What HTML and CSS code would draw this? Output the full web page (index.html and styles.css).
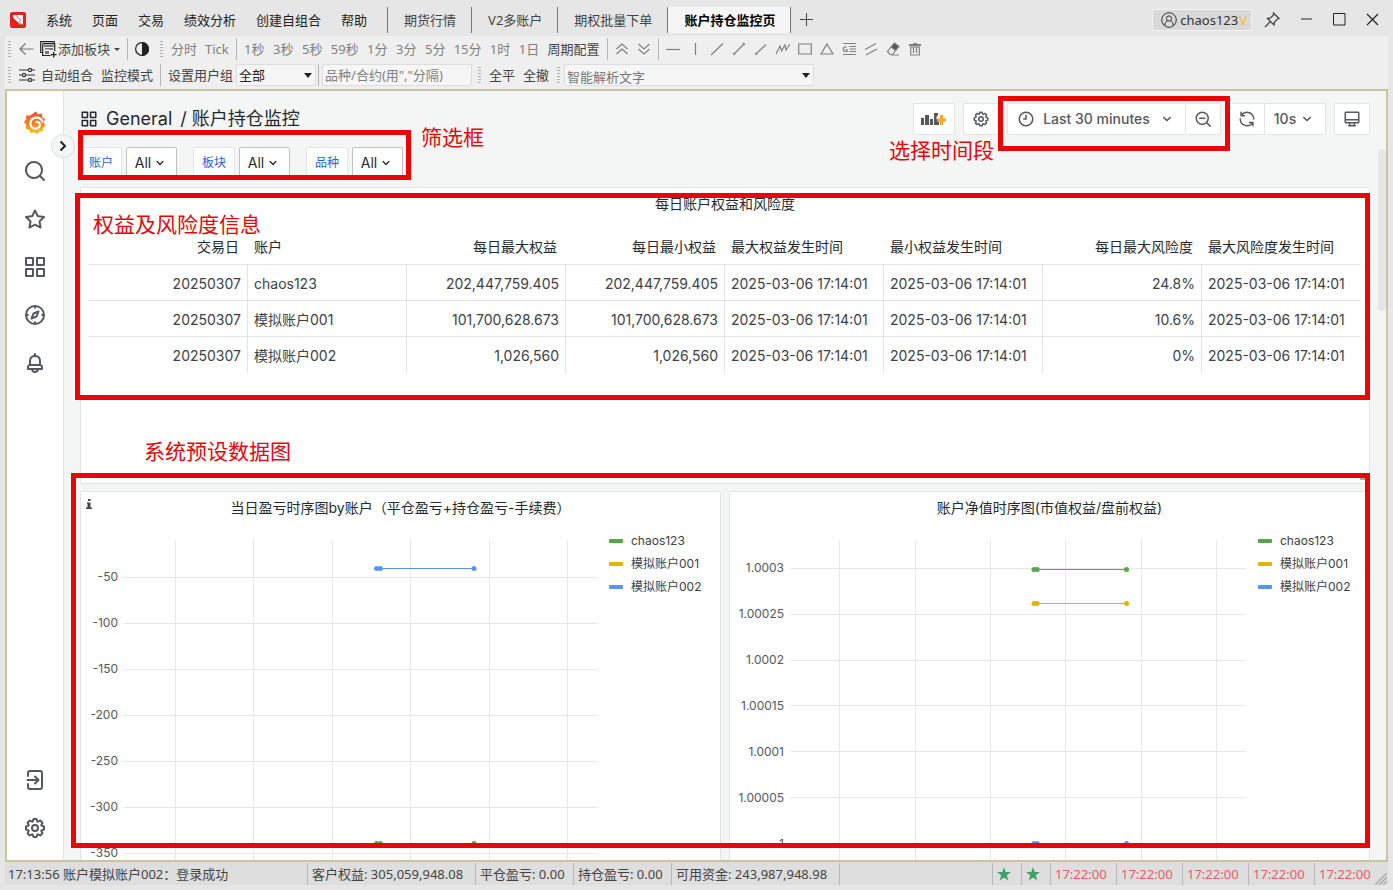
FILE: index.html
```html
<!DOCTYPE html>
<html lang="zh-CN">
<head>
<meta charset="utf-8">
<title>账户持仓监控页</title>
<link rel="stylesheet" href="styles.css">
</head>
<body>
<svg class="defs" aria-hidden="true">
  <symbol id="i-down" viewBox="0 0 24 24"><path d="M17,9.17a1,1,0,0,0-1.41,0L12,12.71,8.46,9.17a1,1,0,0,0-1.41,0,1,1,0,0,0,0,1.42l4.24,4.24a1,1,0,0,0,1.42,0L17,10.59A1,1,0,0,0,17,9.17Z"/></symbol>
  <symbol id="i-cog" viewBox="0 0 24 24"><path d="M21.32,9.55l-1.89-.63.89-1.78A1,1,0,0,0,20.13,6L18,3.87a1,1,0,0,0-1.15-.19l-1.78.89-.63-1.89A1,1,0,0,0,13.5,2h-3a1,1,0,0,0-.95.68L8.92,4.57,7.14,3.68A1,1,0,0,0,6,3.87L3.87,6a1,1,0,0,0-.19,1.15l.89,1.78-1.89.63A1,1,0,0,0,2,10.5v3a1,1,0,0,0,.68.95l1.89.63-.89,1.78A1,1,0,0,0,3.87,18L6,20.13a1,1,0,0,0,1.15.19l1.78-.89.63,1.89a1,1,0,0,0,.95.68h3a1,1,0,0,0,.95-.68l.63-1.89,1.78.89A1,1,0,0,0,18,20.13L20.13,18a1,1,0,0,0,.19-1.15l-.89-1.78,1.89-.63A1,1,0,0,0,22,13.5v-3A1,1,0,0,0,21.32,9.55ZM20,12.78l-1.2.4A2,2,0,0,0,17.64,16l.57,1.14-1.1,1.1L16,17.64a2,2,0,0,0-2.79,1.16l-.4,1.2H11.22l-.4-1.2A2,2,0,0,0,8,17.64l-1.14.57-1.1-1.1L6.36,16A2,2,0,0,0,5.2,13.18L4,12.78V11.22l1.2-.4A2,2,0,0,0,6.36,8L5.79,6.89l1.1-1.1L8,6.36A2,2,0,0,0,10.82,5.2l.4-1.2h1.56l.4,1.2A2,2,0,0,0,16,6.36l1.14-.57,1.1,1.1L17.64,8a2,2,0,0,0,1.16,2.79l1.2.4ZM12,8a4,4,0,1,0,4,4A4,4,0,0,0,12,8Zm0,6a2,2,0,1,1,2-2A2,2,0,0,1,12,14Z"/></symbol>
  <symbol id="i-apps" viewBox="0 0 24 24"><path fill="none" stroke="currentColor" stroke-width="2" stroke-linejoin="round" d="M3 3h7v7H3zM14 3h7v7h-7zM3 14h7v7H3zM14 14h7v7h-7z"/></symbol>
  <symbol id="i-star5" viewBox="0 0 14 14"><path d="M7 0l1.700 5H14L9.800 8.200 11.300 13.600 7 10.400 2.700 13.600 4.200 8.200 0 5h5.300z"/></symbol>
</svg>

<header class="titlebar">
  <svg class="logo" viewBox="0 0 16 16" role="img" aria-label="系统标志"><rect width="16" height="16" rx="2" fill="#e2231a"/><path fill="#fff" d="M3 3h3l2.500 2.500L6.500 3H13v10l-2.500-2.500V13L3 5.500z"/><path stroke="#e2231a" stroke-width=".8" d="M6 3.500l5 5M8.500 10.500l2-2"/></svg>
  <nav class="menu">
    <button>系统</button><button>页面</button><button>交易</button><button>绩效分析</button><button>创建自组合</button><button>帮助</button>
  </nav>
  <nav class="tabs">
    <button>期货行情</button><button>V2多账户</button><button>期权批量下单</button><button class="active">账户持仓监控页</button>
  </nav>
  <button class="icon-btn add-tab" aria-label="新建页面"><svg width="13" height="13" viewBox="0 0 13 13"><path d="M6.500 0v13M0 6.500h13" stroke="#444"/></svg></button>
  <div class="window-tools">
    <button class="user"><svg class="line" width="16" height="16" viewBox="0 0 16 16" stroke="#333"><circle cx="8" cy="8" r="7.300"/><circle cx="8" cy="6.500" r="2.600"/><path d="M4 13.500V12c0-2 1.500-2.800 2.500-3M12 13.500V12c0-2-1.500-2.800-2.500-3"/></svg><span>chaos123<b>V</b></span></button>
    <button class="icon-btn" aria-label="固定"><svg class="line" width="16" height="16" viewBox="0 0 16 16" stroke="#444" stroke-width="1.300"><path d="M9.500 1l5.500 5.500-1.500.5-3 3-.5 3-6.500-6.500 3-.5 3-3zM6 10l-5 5"/></svg></button>
    <button class="icon-btn" aria-label="最小化"><svg width="13" height="13" viewBox="0 0 13 13"><path d="M1 6h11" stroke="#888" stroke-width="2"/></svg></button>
    <button class="icon-btn" aria-label="最大化"><svg width="13" height="13" viewBox="0 0 13 13"><path d="M.5.500h11.500v11.500H.5z" fill="none" stroke="#222"/></svg></button>
    <button class="icon-btn" aria-label="关闭"><svg width="13" height="13" viewBox="0 0 13 13"><path d="M1 1l11 11M12 1L1 12" stroke="#222" stroke-width="1.200"/></svg></button>
  </div>
</header>

<section class="toolbars">
  <div class="bar">
    <i class="grip"></i>
    <button class="icon-btn back" aria-label="返回"><svg class="line" width="15" height="12" viewBox="0 0 15 12" stroke="#777" stroke-width="1.200"><path d="M14.500 6H1M6.500.5L1 6l5.500 5.500"/></svg></button>
    <button class="add-block"><svg width="17" height="17" viewBox="0 0 17 17"><path fill="none" stroke="#222" stroke-width="1.200" d="M2.500 11.500H.7V.7h13.500V2M2.700 2.700h12v7.500M2.700 2.700v11.800h8"/><path fill="#777" d="M4 4h9.500v2H4zM5 7h5v1.500H5zM5 10h4v3H5zM10 7h3v2h-3z"/><path stroke="#111" stroke-width="1.200" d="M13.700 11v5.500M11 13.700h5.500"/></svg>添加板块<i class="caret small"></i></button>
    <i class="sep"></i>
    <button class="icon-btn contrast" aria-label="切换主题"><svg width="14" height="14" viewBox="0 0 14 14"><circle cx="7" cy="7" r="6.400" fill="none" stroke="#222" stroke-width="1.200"/><path d="M7 0a7 7 0 0 1 0 14z" fill="#222"/></svg></button>
    <i class="grip"></i>
    <div class="periods muted"><button>分时</button><button>Tick</button></div>
    <i class="sep"></i>
    <div class="periods muted"><button>1秒</button><button>3秒</button><button>5秒</button><button>59秒</button><button>1分</button><button>3分</button><button>5分</button><button>15分</button><button>1时</button><button>1日</button><button class="dark">周期配置</button></div>
    <i class="sep"></i>
    <div class="draw">
      <button aria-label="上移"><svg viewBox="0 0 14 14"><path d="M1.500 7L7 2l5.500 5M1.500 12L7 7l5.500 5"/></svg></button>
      <button aria-label="下移"><svg viewBox="0 0 14 14"><path d="M1.500 2L7 7l5.500-5M1.500 7L7 12l5.500-5"/></svg></button>
    </div>
    <i class="sep"></i>
    <div class="draw">
      <button aria-label="水平线"><svg viewBox="0 0 14 14"><path d="M0 7.500h14"/></svg></button>
      <button aria-label="垂直线"><svg viewBox="0 0 14 14"><path d="M7.500 1v12"/></svg></button>
      <button aria-label="直线"><svg viewBox="0 0 14 14"><path d="M1 13L13 1.500"/></svg></button>
      <button aria-label="线段"><svg viewBox="0 0 14 14"><path d="M2 12L12 2M1 11l2 2M11 1l2 2"/></svg></button>
      <button aria-label="射线"><svg viewBox="0 0 14 14"><path d="M2 12L12 2.500M1 11l2 2"/></svg></button>
      <button aria-label="折线"><svg viewBox="0 0 14 14"><path d="M0 12L4 4l1.500 5L9 3l1 5 4-6"/></svg></button>
      <button aria-label="矩形"><svg viewBox="0 0 14 14"><path d="M.7 2h12.600v10H.7z"/></svg></button>
      <button aria-label="三角形"><svg viewBox="0 0 14 14"><path d="M7 2l6 10H1z"/></svg></button>
      <button aria-label="黄金分割"><svg viewBox="0 0 14 14"><path d="M1 1.500h13M7.500 4.500H14M7.500 7H14M7.500 9.500H14M1 12.500h13M5 5H2.500L1.500 6v2.500l1 1H5V7.500H3.500"/></svg></button>
      <button aria-label="平行线"><svg viewBox="0 0 14 14"><path d="M1 7.500L12 1.500M2 13l11-6"/></svg></button>
      <button aria-label="橡皮擦"><svg viewBox="0 0 14 14"><path fill="#555" d="M8.500 1l4.500 3.500-3.500 4L5 5z"/><path d="M5 5L1.500 9.500 4 12.500h2.500l3-4M5 13h8"/></svg></button>
      <button aria-label="删除"><svg viewBox="0 0 14 14"><path stroke-width="1.800" d="M1 3h12M5 2h4"/><path d="M2.700 5v8h8.600V5zM5.500 5v6M8.500 5v6"/></svg></button>
    </div>
  </div>
  <div class="bar">
    <i class="grip"></i>
    <button class="icon-btn sliders" aria-label="设置"><svg class="line" width="16" height="14" viewBox="0 0 16 14" stroke="#333" stroke-width="1.200"><path d="M0 2h9M13 2h3M0 7h3M7 7h9M0 12h9M13 12h3"/><circle cx="11" cy="2" r="1.600"/><circle cx="5" cy="7" r="1.600"/><circle cx="11" cy="12" r="1.600"/></svg></button>
    <div class="periods"><button>自动组合</button><button>监控模式</button></div>
    <i class="sep"></i>
    <label class="group-label" for="group">设置用户组</label>
    <span class="combo group"><select id="group"><option>全部</option></select><i class="caret"></i></span>
    <i class="sep tight"></i>
    <input class="contract" type="text" aria-label="品种或合约" placeholder='品种/合约(用&quot;,&quot;分隔)'>
    <i class="grip"></i>
    <div class="periods"><button>全平</button><button>全撤</button></div>
    <i class="grip"></i>
    <span class="combo parse"><select aria-label="智能解析文字"><option>智能解析文字</option></select><i class="caret"></i></span>
  </div>
</section>

<main class="frame">
  <aside class="side">
    <svg class="grafana" viewBox="0 0 24 26" role="img" aria-label="Grafana">
      <defs><linearGradient id="flame" x1="0" y1="0" x2="0" y2="1"><stop offset="0" stop-color="#ee4c2e"/><stop offset=".55" stop-color="#f58220"/><stop offset="1" stop-color="#fcc80a"/></linearGradient></defs>
      <path fill="url(#flame)" d="M9.500 3L13 .5l2 3 4.500-.8.300 4L23 9l-1.600 3.500 1.800 3.300-2.700 2.700-.2 3.500-3.500-.1L14.500 25l-3-2L7 24l-1-3.500L1.800 19l.7-4L0 12l2.600-3L2.200 4.800 6.500 5z"/>
      <path fill="none" stroke="#fff" stroke-width="2.400" stroke-linecap="round" d="M20 11.500C19 8.500 16 7 13 7.200c-4 .3-6.500 3.500-6 7 .5 3.300 3.200 5.300 6.300 4.900 2.700-.4 4.300-2.600 3.900-4.800-.4-1.800-2-2.900-3.600-2.500"/>
    </svg>
    <a href="#" aria-label="搜索"><svg viewBox="0 0 24 24"><path d="M21.710,20.290,18,16.610A9,9,0,1,0,16.610,18l3.680,3.680a1,1,0,0,0,1.420,0A1,1,0,0,0,21.710,20.290ZM11,18a7,7,0,1,1,7-7A7,7,0,0,1,11,18Z"/></svg></a>
    <a href="#" aria-label="收藏"><svg viewBox="0 0 24 24"><path d="M22,9.670A1,1,0,0,0,21.140,9l-5.690-.83L12.900,3a1,1,0,0,0-1.800,0L8.550,8.160,2.860,9a1,1,0,0,0-.81.680,1,1,0,0,0,.25,1l4.130,4-1,5.680A1,1,0,0,0,6.900,21.440L12,18.770l5.100,2.670a.93.930,0,0,0,.46.120,1,1,0,0,0,.59-.19,1,1,0,0,0,.4-1l-1-5.680,4.130-4A1,1,0,0,0,22,9.670Zm-6.150,4a1,1,0,0,0-.29.880l.72,4.200-3.760-2a1.060,1.060,0,0,0-.94,0l-3.760,2,.72-4.200a1,1,0,0,0-.29-.88l-3-3,4.210-.61a1,1,0,0,0,.76-.55L12,5.700l1.880,3.820a1,1,0,0,0,.76.550l4.210.610Z"/></svg></a>
    <a href="#" aria-label="仪表盘"><svg><use href="#i-apps"/></svg></a>
    <a href="#" aria-label="探索"><svg viewBox="0 0 24 24"><g fill="none" stroke="currentColor" stroke-width="2"><circle cx="12" cy="12" r="9"/><path stroke-linejoin="round" d="M15.500 8.500l-2 5-5 2 2-5zM12 3v2.500M12 18.500V21M3 12h2.500M18.500 12H21"/></g></svg></a>
    <a href="#" aria-label="告警"><svg viewBox="0 0 24 24"><path d="M18,13.180V10a6,6,0,0,0-5-5.910V3a1,1,0,0,0-2,0V4.090A6,6,0,0,0,6,10v3.180A3,3,0,0,0,4,16v2a1,1,0,0,0,1,1H8.140a4,4,0,0,0,7.720,0H19a1,1,0,0,0,1-1V16A3,3,0,0,0,18,13.180ZM8,10a4,4,0,0,1,8,0v3H8Zm4,10a2,2,0,0,1-1.720-1h3.440A2,2,0,0,1,12,20Zm6-3H6V16a1,1,0,0,1,1-1H17a1,1,0,0,1,1,1Z"/></svg></a>
    <a href="#" class="push" aria-label="登录"><svg viewBox="0 0 24 24"><path fill="none" stroke="currentColor" stroke-width="2" stroke-linecap="round" stroke-linejoin="round" d="M5 8V5q0-2 2-2h10q2 0 2 2v14q0 2-2 2H7q-2 0-2-2v-3M4.500 12H15M12 8.500l3.500 3.500-3.500 3.500"/></svg></a>
    <a href="#" aria-label="配置"><svg><use href="#i-cog"/></svg></a>
    <button class="expand" aria-label="展开菜单"><svg width="8" height="12" viewBox="0 0 8 12"><path d="M1.500 1.500L6 6l-4.500 4.500" fill="none" stroke="#222" stroke-width="2"/></svg></button>
  </aside>

  <div class="dash">
    <div class="dash-head">
      <h1><svg><use href="#i-apps"/></svg><a href="#">General</a><span>/ 账户持仓监控</span></h1>
      <div class="actions">
        <button class="box wide" aria-label="添加面板"><svg width="26" height="16" viewBox="0 0 26 16"><path fill="#55585c" d="M0 7h3v7H0zM4 4h4v10H4zM9 8h3v6H9zM13 2h4v2l-1.500 2v2L18 11v3h-5z"/><path fill="#f9a62b" d="M19 4h3v3.500h3v3h-3V14h-3v-3.500h-3v-3h3z"/></svg></button>
        <button class="box" aria-label="仪表盘设置"><svg><use href="#i-cog"/></svg></button>
        <div class="joined">
          <button class="box range"><svg viewBox="0 0 24 24"><path fill="none" stroke="currentColor" stroke-width="2" stroke-linecap="round" d="M12 3a9 9 0 1 1 0 18a9 9 0 1 1 0-18M12 7v5H9"/></svg>Last 30 minutes<svg><use href="#i-down"/></svg></button>
          <button class="box" aria-label="缩小"><svg viewBox="0 0 24 24"><path fill="none" stroke="currentColor" stroke-width="2" stroke-linecap="round" d="M11 3a8 8 0 1 1 0 16a8 8 0 1 1 0-16M17 17l4.500 4.500M7.500 11h7"/></svg></button>
        </div>
        <div class="joined">
          <button class="box" aria-label="刷新"><svg viewBox="0 0 24 24"><path d="M19.910,15.510H15.380a1,1,0,0,0,0,2h2.400A8,8,0,0,1,4,12a1,1,0,0,0-2,0,10,10,0,0,0,16.880,7.230V21a1,1,0,0,0,2,0V16.500A1,1,0,0,0,19.910,15.510ZM12,2A10,10,0,0,0,5.120,4.770V3a1,1,0,0,0-2,0V7.500a1,1,0,0,0,1,1h4.500a1,1,0,0,0,0-2H6.220A8,8,0,0,1,20,12a1,1,0,0,0,2,0A10,10,0,0,0,12,2Z"/></svg></button>
          <button class="box every">10s<svg><use href="#i-down"/></svg></button>
        </div>
        <button class="box" aria-label="全屏"><svg viewBox="0 0 24 24"><path fill="none" stroke="currentColor" stroke-width="2" stroke-linejoin="round" d="M4 3h16q1 0 1 1v12q0 1-1 1H4q-1 0-1-1V4q0-1 1-1zM3 13h18M9 17v4h6v-4M7 21h10"/></svg></button>
      </div>
    </div>

    <div class="filters">
      <div class="filter"><span id="f1">账户</span><button aria-labelledby="f1">All<svg><use href="#i-down"/></svg></button></div>
      <div class="filter"><span id="f2">板块</span><button aria-labelledby="f2">All<svg><use href="#i-down"/></svg></button></div>
      <div class="filter"><span id="f3">品种</span><button aria-labelledby="f3">All<svg><use href="#i-down"/></svg></button></div>
    </div>

    <section class="panel table-panel">
      <h2>每日账户权益和风险度</h2>
      <table>
        <thead><tr><th class="n">交易日</th><th>账户</th><th class="n">每日最大权益</th><th class="n">每日最小权益</th><th>最大权益发生时间</th><th>最小权益发生时间</th><th class="n">每日最大风险度</th><th>最大风险度发生时间</th></tr></thead>
        <tbody>
          <tr><td class="n">20250307</td><td>chaos123</td><td class="n">202,447,759.405</td><td class="n">202,447,759.405</td><td>2025-03-06 17:14:01</td><td>2025-03-06 17:14:01</td><td class="n">24.8%</td><td>2025-03-06 17:14:01</td></tr>
          <tr><td class="n">20250307</td><td>模拟账户001</td><td class="n">101,700,628.673</td><td class="n">101,700,628.673</td><td>2025-03-06 17:14:01</td><td>2025-03-06 17:14:01</td><td class="n">10.6%</td><td>2025-03-06 17:14:01</td></tr>
          <tr><td class="n">20250307</td><td>模拟账户002</td><td class="n">1,026,560</td><td class="n">1,026,560</td><td>2025-03-06 17:14:01</td><td>2025-03-06 17:14:01</td><td class="n">0%</td><td>2025-03-06 17:14:01</td></tr>
        </tbody>
      </table>
      <i class="resize"></i>
    </section>

    <div class="charts">
      <section class="panel chart">
        <i class="info"><svg width="6" height="10" viewBox="0 0 6 10"><path fill="#444" d="M2 0h2.500v2H2zM1 3.500h3.500V8.500H6V10H0V8.500h1.500V5H1z"/></svg></i>
        <h2>当日盈亏时序图by账户（平仓盈亏+持仓盈亏-手续费）</h2>
        <div class="plot-row">
          <ol class="axis pnl"><li>-50</li><li>-100</li><li>-150</li><li>-200</li><li>-250</li><li>-300</li><li>-350</li></ol>
          <svg class="plot">
            <g class="grid">
              <path d="M0 37.500h2000M0 83.500h2000M0 129.500h2000M0 175.500h2000M0 221.500h2000M0 267.500h2000M0 313.500h2000"/>
              <line x1="10.900%" x2="10.900%" y2="100%"/><line x1="27.400%" x2="27.400%" y2="100%"/><line x1="44.100%" x2="44.100%" y2="100%"/><line x1="60.600%" x2="60.600%" y2="100%"/><line x1="77.200%" x2="77.200%" y2="100%"/><line x1="93.700%" x2="93.700%" y2="100%"/>
            </g>
            <g class="blue"><line x1="53.300%" x2="74%" y1="28.500" y2="28.500"/><circle cx="53.400%" cy="28.500" r="2.500"/><circle cx="54.200%" cy="28.500" r="2.500"/><circle cx="74%" cy="28.500" r="2.500"/></g>
            <g class="green"><line x1="53.300%" x2="74%" y1="303.500" y2="303.500"/><circle cx="53.400%" cy="303.500" r="2.500"/><circle cx="54.200%" cy="303.500" r="2.500"/><circle cx="74%" cy="303.500" r="2.500"/></g>
          </svg>
          <ul class="legend"><li><i class="green"></i>chaos123</li><li><i class="yellow"></i>模拟账户001</li><li><i class="blue"></i>模拟账户002</li></ul>
        </div>
      </section>
      <section class="panel chart">
        <h2>账户净值时序图(市值权益/盘前权益)</h2>
        <div class="plot-row">
          <ol class="axis nav"><li>1.0003</li><li>1.00025</li><li>1.0002</li><li>1.00015</li><li>1.0001</li><li>1.00005</li><li>1</li></ol>
          <svg class="plot">
            <g class="grid">
              <path d="M0 28.500h2000M0 74.500h2000M0 120.500h2000M0 165.500h2000M0 211.500h2000M0 257.500h2000M0 303.500h2000"/>
              <line x1="10.900%" x2="10.900%" y2="100%"/><line x1="27.500%" x2="27.500%" y2="100%"/><line x1="44%" x2="44%" y2="100%"/><line x1="60.400%" x2="60.400%" y2="100%"/><line x1="77.100%" x2="77.100%" y2="100%"/><line x1="93.500%" x2="93.500%" y2="100%"/>
            </g>
            <g class="green"><line x1="53.500%" x2="73.800%" y1="29.500" y2="29.500"/><circle cx="53.500%" cy="29.500" r="2.500"/><circle cx="54.200%" cy="29.500" r="2.500"/><circle cx="73.800%" cy="29.500" r="2.500"/></g>
            <g class="yellow"><line x1="53.500%" x2="73.800%" y1="63.500" y2="63.500"/><circle cx="53.500%" cy="63.500" r="2.500"/><circle cx="54.200%" cy="63.500" r="2.500"/><circle cx="73.800%" cy="63.500" r="2.500"/></g>
            <g class="blue"><line x1="53.500%" x2="73.800%" y1="303.500" y2="303.500"/><circle cx="53.500%" cy="303.500" r="2.500"/><circle cx="54.200%" cy="303.500" r="2.500"/><circle cx="73.800%" cy="303.500" r="2.500"/></g>
          </svg>
          <ul class="legend"><li><i class="green"></i>chaos123</li><li><i class="yellow"></i>模拟账户001</li><li><i class="blue"></i>模拟账户002</li></ul>
        </div>
      </section>
    </div>
    <i class="scroll-thumb"></i>
  </div>

  <div class="mark mark-filter"></div>
  <div class="mark mark-time"></div>
  <div class="mark mark-table"></div>
  <div class="mark mark-charts"></div>
  <p class="note note-filter">筛选框</p>
  <p class="note note-time">选择时间段</p>
  <p class="note note-table">权益及风险度信息</p>
  <p class="note note-charts">系统预设数据图</p>
</main>

<footer class="status">
  <span class="message">17:13:56 账户模拟账户002：登录成功</span>
  <span class="equity">客户权益: 305,059,948.08</span>
  <span class="closed">平仓盈亏: 0.00</span>
  <span class="open">持仓盈亏: 0.00</span>
  <span class="funds">可用资金: 243,987,948.98</span>
  <span class="spacer"></span>
  <span class="star"><svg width="14" height="14"><use href="#i-star5"/></svg></span>
  <span class="star"><svg width="14" height="14"><use href="#i-star5"/></svg></span>
  <time>17:22:00</time><time>17:22:00</time><time>17:22:00</time><time>17:22:00</time><time>17:22:00</time>
  <svg class="corner" width="12" height="12" viewBox="0 0 12 12"><path d="M0 12L12 0M4 12l8-8M8 12l4-4" stroke="#aaa" stroke-width="1.500"/></svg>
</footer>
</body>
</html>
```
FILE: styles.css
```css
* { box-sizing: border-box; }
body {
  margin: 0; height: 100vh; overflow: hidden; padding: 0 5px 5px;
  display: flex; flex-direction: column; background: #e6e6e6; color: #333;
  font: 13px/18px "Noto Sans", "Noto Sans CJK SC", sans-serif;
}
button, input, select { font: inherit; color: inherit; margin: 0; }
button { background: none; border: 0; padding: 0; white-space: nowrap; }
h1, h2, ol, ul, p { margin: 0; padding: 0; font-weight: 400; list-style: none; }
a { color: inherit; text-decoration: none; }
svg { display: block; flex: none; fill: currentColor; }
svg.line { fill: none; }
.defs { position: absolute; width: 0; height: 0; }
.icon-btn { display: flex; align-items: center; justify-content: center; }

/* title bar */
.titlebar { flex: none; height: 36px; display: flex; align-items: center; padding: 3px 9px 0 5px; }
.logo { width: 16px; height: 16px; }
.menu { display: flex; gap: 20px; margin: 0 20px; color: #222; }
.tabs { display: flex; height: 26px; border-left: 1px solid #777; }
.tabs button { border-right: 1px solid #777; padding: 0 15px 0 16px; color: #444; }
.tabs .active { background: #f5f5f5; color: #000; font-weight: 700; }
.add-tab { margin-left: 9px; }
.window-tools { margin-left: auto; display: flex; align-items: center; gap: 20px; }
.user {
  display: flex; align-items: center; gap: 3px; height: 22px; padding: 0 4px 0 8px; margin-right: -8px;
  background: #d9d9d9; border: 1px solid #f3f3f3; border-radius: 3px; color: #333;
}
.user b { color: #fdb913; font-weight: 400; margin-left: 1px; }

/* tool bars */
.toolbars { flex: none; background: #efefef; padding-bottom: 1px; }
.bar { display: flex; align-items: center; height: 26px; color: #444; }
.grip {
  flex: none; width: 3px; height: 16px; margin: 0 8px 0 3px;
  background: repeating-linear-gradient(#b0b0b0 0 1px, transparent 1px 3px);
}
.sep { flex: none; width: 1px; height: 22px; background: #b5b5b5; margin: 0 7px; }
.sep.tight { margin: 0 3px 0 2px; }
.caret { width: 0; height: 0; border: 4px solid transparent; border-top: 5px solid #222; border-bottom: 0; pointer-events: none; }
.caret.small { border-width: 3px 3px 0; border-top-color: #444; margin-left: 3px; }
.back { margin-right: 6px; }
.add-block { display: flex; align-items: center; gap: 1px; }
.contrast { margin-right: 8px; }
.periods { display: flex; gap: 8px; }
.periods.muted { color: #808080; }
.periods button { min-width: 21px; }
.periods .dark { color: #444; }
.draw { display: flex; gap: 8px; }
.draw svg { width: 14px; height: 14px; fill: none; stroke: #808080; stroke-width: 1.2; }
.sliders { margin-right: 6px; }
.group-label { margin-right: 3px; white-space: nowrap; }
.combo { position: relative; display: flex; height: 22px; }
.combo select {
  appearance: none; width: 100%; height: 100%; padding: 0 16px 0 2px; color: #222;
  background: #f6f6f6; border: 1px solid #ddd; border-radius: 2px;
}
.combo .caret { position: absolute; right: 4px; top: 9px; }
.group { width: 80px; }
.parse { width: 250px; }
.parse select { color: #777; padding-top: 3px; }
.contract { width: 150px; height: 22px; padding: 0 2px; margin-right: 3px; background: #f6f6f6; border: 1px solid #ddd; border-radius: 2px; }
.contract::placeholder { color: #808080; opacity: 1; }
.bar .periods + .grip { margin-left: 8px; margin-right: 4px; }
.bar .contrast + .grip { margin-left: 3px; }

/* framed page */
.frame {
  flex: 1; min-height: 0; position: relative; display: flex; overflow: hidden;
  border: 2px solid #cbc59d; background: #f4f5f5; color: #24292e;
  font-family: Inter, "Noto Sans CJK SC", sans-serif; font-size: 14px;
}
.side {
  flex: none; width: 57px; position: relative; display: flex; flex-direction: column; align-items: center;
  background: #fff; border-right: 1px solid #e0e2e4; padding: 20px 0; gap: 24px; color: #55585c;
}
.side svg { width: 24px; height: 24px; }
.side .push { margin-top: auto; }
.side .expand {
  position: absolute; right: -12px; top: 43px; width: 24px; height: 24px; border-radius: 50%;
  background: #f4f5f5; border: 1px solid #dcdddf; display: flex; align-items: center; justify-content: center;
}
.side .expand svg { width: 8px; height: 12px; fill: none; }

.dash { flex: 1; min-width: 0; position: relative; padding: 12px 16px 0; overflow: hidden; }
.dash-head { display: flex; justify-content: space-between; }
.dash-head h1 { display: flex; align-items: center; gap: 8px; font-size: 18px; line-height: 32px; }
.dash-head h1 svg { width: 18px; height: 18px; }
.dash-head h1 span { white-space: nowrap; }
.actions { display: flex; gap: 8px; color: #55585c; }
.box {
  height: 32px; min-width: 36px; padding: 0 8px; display: flex; align-items: center; justify-content: center; gap: 8px;
  background: #fff; border: 1px solid #e2e4e5; border-radius: 2px; font-weight: 500;
}
.box svg:not([width]) { width: 18px; height: 18px; }
.box.wide { width: 42px; }
.box.range { width: 179px; }
.box.every { width: 62px; gap: 2px; }
.joined { display: flex; }
.joined .box + .box { margin-left: -1px; }

.filters { display: flex; gap: 16px; margin-top: 12px; }
.filter { display: flex; gap: 4px; }
.filter span {
  width: 42px; height: 32px; line-height: 30px; text-align: center; font-size: 12px; color: #1f62e0;
  background: #fff; border: 1px solid #e2e4e5; border-radius: 2px;
}
.filter button {
  width: 51px; height: 32px; display: flex; align-items: center; justify-content: center; gap: 1px;
  background: #fff; border: 1px solid #bfc1c4; border-radius: 2px;
}
.filter svg { width: 16px; height: 16px; }

.panel { position: relative; background: #fff; border: 1px solid #e2e4e5; border-radius: 2px; }
.panel h2 { text-align: center; font-size: 14px; line-height: 32px; }
.table-panel { margin-top: 8px; height: 297px; padding: 0 8px; }
table { width: 100%; table-layout: fixed; border-collapse: separate; border-spacing: 0; line-height: 20px; }
th { font-weight: 400; text-align: left; height: 45px; padding: 9px 9px 0 6px; white-space: nowrap; border-bottom: 1px solid #e2e4e5; }
td { height: 36px; padding: 2px 6px 0; white-space: nowrap; border-right: 1px solid #e2e4e5; border-bottom: 1px solid #e2e4e5; color: #3c4146; }
td:last-child { border-right: 0; }
tr:last-child td { border-bottom: 0; }
.n { text-align: right; }
.resize { position: absolute; right: 3px; bottom: 3px; width: 6px; height: 6px; border: solid #aaa; border-width: 0 2px 2px 0; }

.charts { display: grid; grid-template-columns: 1fr 1fr; gap: 8px; margin-top: 7px; }
.info { position: absolute; left: 5px; top: 7px; }
.plot-row { display: flex; margin-top: 16px; font-size: 12px; }
.axis { flex: none; text-align: right; padding-right: 6px; color: #55585c; }
.axis li { height: 46px; line-height: 46px; }
.axis.pnl { width: 43px; padding-top: 14px; }
.axis.nav { width: 60px; padding-top: 5px; }
.plot { flex: 1; min-width: 0; height: 340px; }
.plot line, .grid path { stroke: currentColor; fill: none; shape-rendering: crispEdges; }
.grid { color: #e6e7e8; }
.legend { flex: none; width: 123px; padding-left: 12px; color: #3c4146; }
.legend li { display: flex; align-items: center; gap: 8px; height: 23px; line-height: 23px; margin-top: -11px; margin-bottom: 11px; white-space: nowrap; }
.legend i { width: 14px; height: 4px; border-radius: 1px; background: currentColor; }
.green { color: #56a64b; }
.yellow { color: #e0b400; }
.blue { color: #5794f2; }
.scroll-thumb { position: absolute; right: 0; top: 58px; width: 8px; height: 162px; border-radius: 4px; background: #e5e6e7; }

/* callouts drawn over the page */
.mark { position: absolute; border: 5px solid #ea0606; pointer-events: none; }
.mark-filter { left: 71px; top: 39px; width: 333px; height: 50px; }
.mark-time { right: 156px; top: 5px; width: 232px; height: 55px; }
.mark-table { left: 68px; right: 16px; top: 102px; height: 207px; }
.mark-charts { left: 64px; right: 16px; top: 382px; height: 375px; }
.note { position: absolute; color: #ea0606; font-size: 21px; line-height: 28px; white-space: nowrap; pointer-events: none; }
.note-filter { left: 414px; top: 33px; }
.note-time { right: 392px; top: 46px; }
.note-table { left: 86px; top: 120px; }
.note-charts { left: 137px; top: 347px; }

/* status bar */
.status { flex: none; position: relative; display: flex; height: 23px; line-height: 23px; padding-top: 1px; background: #dedede; color: #444; }
.status > span, .status time { flex: none; padding: 0 4px; border-right: 1px solid #b8b8b8; white-space: nowrap; }
.status .message { width: 303px; padding-left: 3px; }
.status .equity, .status .funds { width: 168px; }
.status .closed, .status .open { width: 98px; }
.status .spacer { flex: 1; }
.status .star { width: 29px; display: flex; align-items: center; justify-content: center; padding: 0 6px 0 0; color: #3fa166; }
.status time { width: 66px; color: #f05a62; }
.status time:last-of-type { width: 73px; border-right: 0; }
.corner { position: absolute; right: 1px; bottom: 0; }
```
